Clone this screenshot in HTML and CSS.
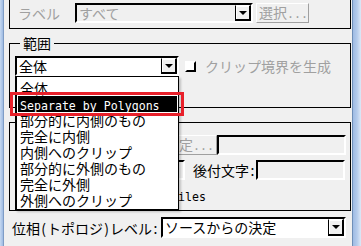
FILE: index.html
```html
<!DOCTYPE html>
<html lang="ja">
<head>
    <meta charset="UTF-8">
    <title>範囲</title>
    <link rel="stylesheet" href="styles.css">
</head>
<body>
    <div class="window">
        <div class="frame-left"></div>

        <div class="content">
            <!-- Label row (group cut off at the top) -->
            <div class="group group-top">
                <div class="row row-label">
                    <span class="label disabled label-name">ラベル</span>
                    <div class="combo combo-disabled combo-label">
                        <span class="value">すべて</span>
                        <span class="arrow"><i></i></span>
                    </div>
                    <button class="btn btn-select" disabled>選択<span class="dots">...</span></button>
                </div>
            </div>

            <!-- Range group -->
            <div class="group group-range">
                <div class="group-title">範囲</div>
                <div class="row row-range">
                    <div class="combo combo-range">
                        <span class="value">全体</span>
                        <span class="arrow"><i></i></span>
                    </div>
                    <label class="check disabled">
                        <span class="box"></span>
                        <span>クリップ境界を生成</span>
                    </label>
                </div>
            </div>

            <!-- Output naming group -->
            <div class="group group-output">
                <div class="group-title hidden">出力</div>
                <div class="row row-prefix">
                    <button class="btn btn-name" disabled>設定<span class="dots">...</span></button>
                    <span class="field field-wide"></span>
                </div>
                <div class="row row-suffix">
                    <span class="field field-short"></span>
                    <span class="label label-suffix">後付文字<span class="half">:</span></span>
                    <span class="field field-suffix"></span>
                </div>
                <div class="row row-merge">
                    <span class="latin">Files</span>
                </div>
            </div>

            <div class="row row-topo">
                <span class="label label-topo">位相<span class="half">(</span>トポロジ<span class="half">)</span>レベル<span class="half">:</span></span>
                <div class="combo combo-topo">
                    <span class="value">ソースからの決定</span>
                    <span class="arrow"><i></i></span>
                </div>
            </div>

            <!-- Open dropdown of the range combo -->
            <ul class="dropdown">
                <li>全体</li>
                <li class="selected"><span class="latin">Separate by Polygons</span></li>
                <li>部分的に内側のもの</li>
                <li>完全に内側</li>
                <li>内側へのクリップ</li>
                <li>部分的に外側のもの</li>
                <li>完全に外側</li>
                <li>外側へのクリップ</li>
            </ul>
            <div class="highlight-mark"></div>
        </div>

        <div class="frame-right"></div>
    </div>
</body>
</html>
```

FILE: styles.css
```css
body {
    margin: 0;
    font-family: "Noto Sans CJK JP", sans-serif;
    font-size: 14px;
    line-height: 16px;
    color: #000;
    background-color: #f0f0f0;
}

.window {
    display: flex;
    width: 361px;
    height: 246px;
    overflow: hidden;
}

.frame-left {
    width: 3px;
    background: linear-gradient(to right, #c6d9f1, #9fbbe3);
    border-right: 1px solid #7f9dc6;
}

.frame-right {
    width: 8px;
    border-left: 1px solid #6f8fb8;
    background: linear-gradient(to right, #9fbbe3 0, #b4cbeb 50%, #dde8f6 100%);
}

.content {
    flex: 1;
    position: relative;
}

.latin {
    font-family: "DejaVu Sans Mono", monospace;
    font-size: 11.6px;
}

.dots {
    font-family: "DejaVu Sans Mono", monospace;
    font-size: 11.6px;
}

.half {
    display: inline-block;
    width: 7px;
    text-align: center;
}

.disabled {
    color: #a0a0a0;
}

.hidden {
    visibility: hidden;
}

.row {
    display: flex;
    align-items: center;
}

/* group boxes */
.group {
    box-sizing: border-box;
    width: 342px;
    margin-left: 5px;
    border: 1px solid #000;
}

.group-title {
    width: max-content;
    margin: -9px 0 0 10px;
    padding: 0 3px;
    background-color: #f0f0f0;
    line-height: 16px;
}

.group-top {
    height: 29px;
    border-top: none;
}

.row-label {
    padding-top: 3px;
}

.label-name {
    margin-left: 8px;
    width: 57px;
}

.group-range {
    height: 65px;
    margin-top: 14px;
}

.row-range {
    margin-top: 5px;
    padding-left: 5px;
}

.group-output {
    height: 89px;
    margin-top: 14px;
}

/* sunken combo boxes and fields */
.combo {
    display: flex;
    box-sizing: border-box;
    height: 20px;
    border: 2px solid;
    border-color: #000 #fff #fff #000;
    background-color: #fff;
}

.combo .value {
    flex: 1;
    padding-left: 2px;
    line-height: 16px;
    white-space: nowrap;
}

.combo .arrow {
    width: 16px;
    box-sizing: border-box;
    border-style: solid;
    border-width: 1px 2px 2px 1px;
    border-color: #fff #000 #000 #000;
    box-shadow: inset 1px 1px 0 #fff;
    background-color: #f0f0f0;
    display: flex;
    align-items: center;
    justify-content: center;
}

.combo .arrow i {
    width: 0;
    height: 0;
    border-left: 4px solid transparent;
    border-right: 4px solid transparent;
    border-top: 4px solid #000;
}

.combo-disabled {
    background-color: #f0f0f0;
    color: #a0a0a0;
}

.combo-label {
    width: 178px;
}

.combo-range {
    width: 164px;
}

.combo-topo {
    width: 185px;
    height: 21px;
}

.btn {
    font: inherit;
    height: 20px;
    box-sizing: border-box;
    padding: 0 2px;
    background-color: #f0f0f0;
    color: #a0a0a0;
    border: 1px solid;
    border-color: #fff #a0a0a0 #a0a0a0 #fff;
    line-height: 16px;
    white-space: nowrap;
}

.btn-select {
    width: 53px;
    margin-left: 3px;
}

.check {
    display: flex;
    align-items: center;
    margin-left: 6px;
}

.check .box {
    width: 11px;
    height: 11px;
    box-sizing: border-box;
    border: 2px solid;
    border-color: #fff #000 #000 #fff;
    background-color: #fff;
    margin-right: 9px;
}

.field {
    display: block;
    box-sizing: border-box;
    height: 20px;
    border: 2px solid;
    border-color: #000 #fff #fff #000;
}

.row-prefix {
    margin-top: 5px;
    padding-left: 145px;
}

.btn-name {
    width: 62px;
    text-align: right;
}

.field-wide {
    width: 129px;
}

.row-suffix {
    margin-top: 5px;
    padding-left: 150px;
}

.field-short {
    width: 25px;
}

.label-suffix {
    margin-left: 8px;
}

.field-suffix {
    width: 89px;
}

.row-merge {
    margin-top: 9px;
    padding-left: 161px;
}

.row-topo {
    margin-top: 6px;
    padding-left: 8px;
}

.label-topo {
    width: 149px;
}

/* open list of the range combo */
.dropdown {
    position: absolute;
    left: 11px;
    top: 76px;
    width: 159px;
    margin: 0;
    padding: 3px 1px 1px 1px;
    list-style: none;
    background-color: #fff;
    border: 1px solid #000;
    border-left-width: 2px;
    box-shadow: 2px 2px 2px rgba(0, 0, 0, 0.2);
}

.dropdown li {
    height: 16px;
    padding-left: 2px;
    line-height: 16px;
    white-space: nowrap;
}

.dropdown li.selected {
    background-color: #000;
    color: #fff;
}

.highlight-mark {
    position: absolute;
    left: 6px;
    top: 92px;
    width: 168px;
    height: 18px;
    border: 3px solid #e8202a;
}
```
